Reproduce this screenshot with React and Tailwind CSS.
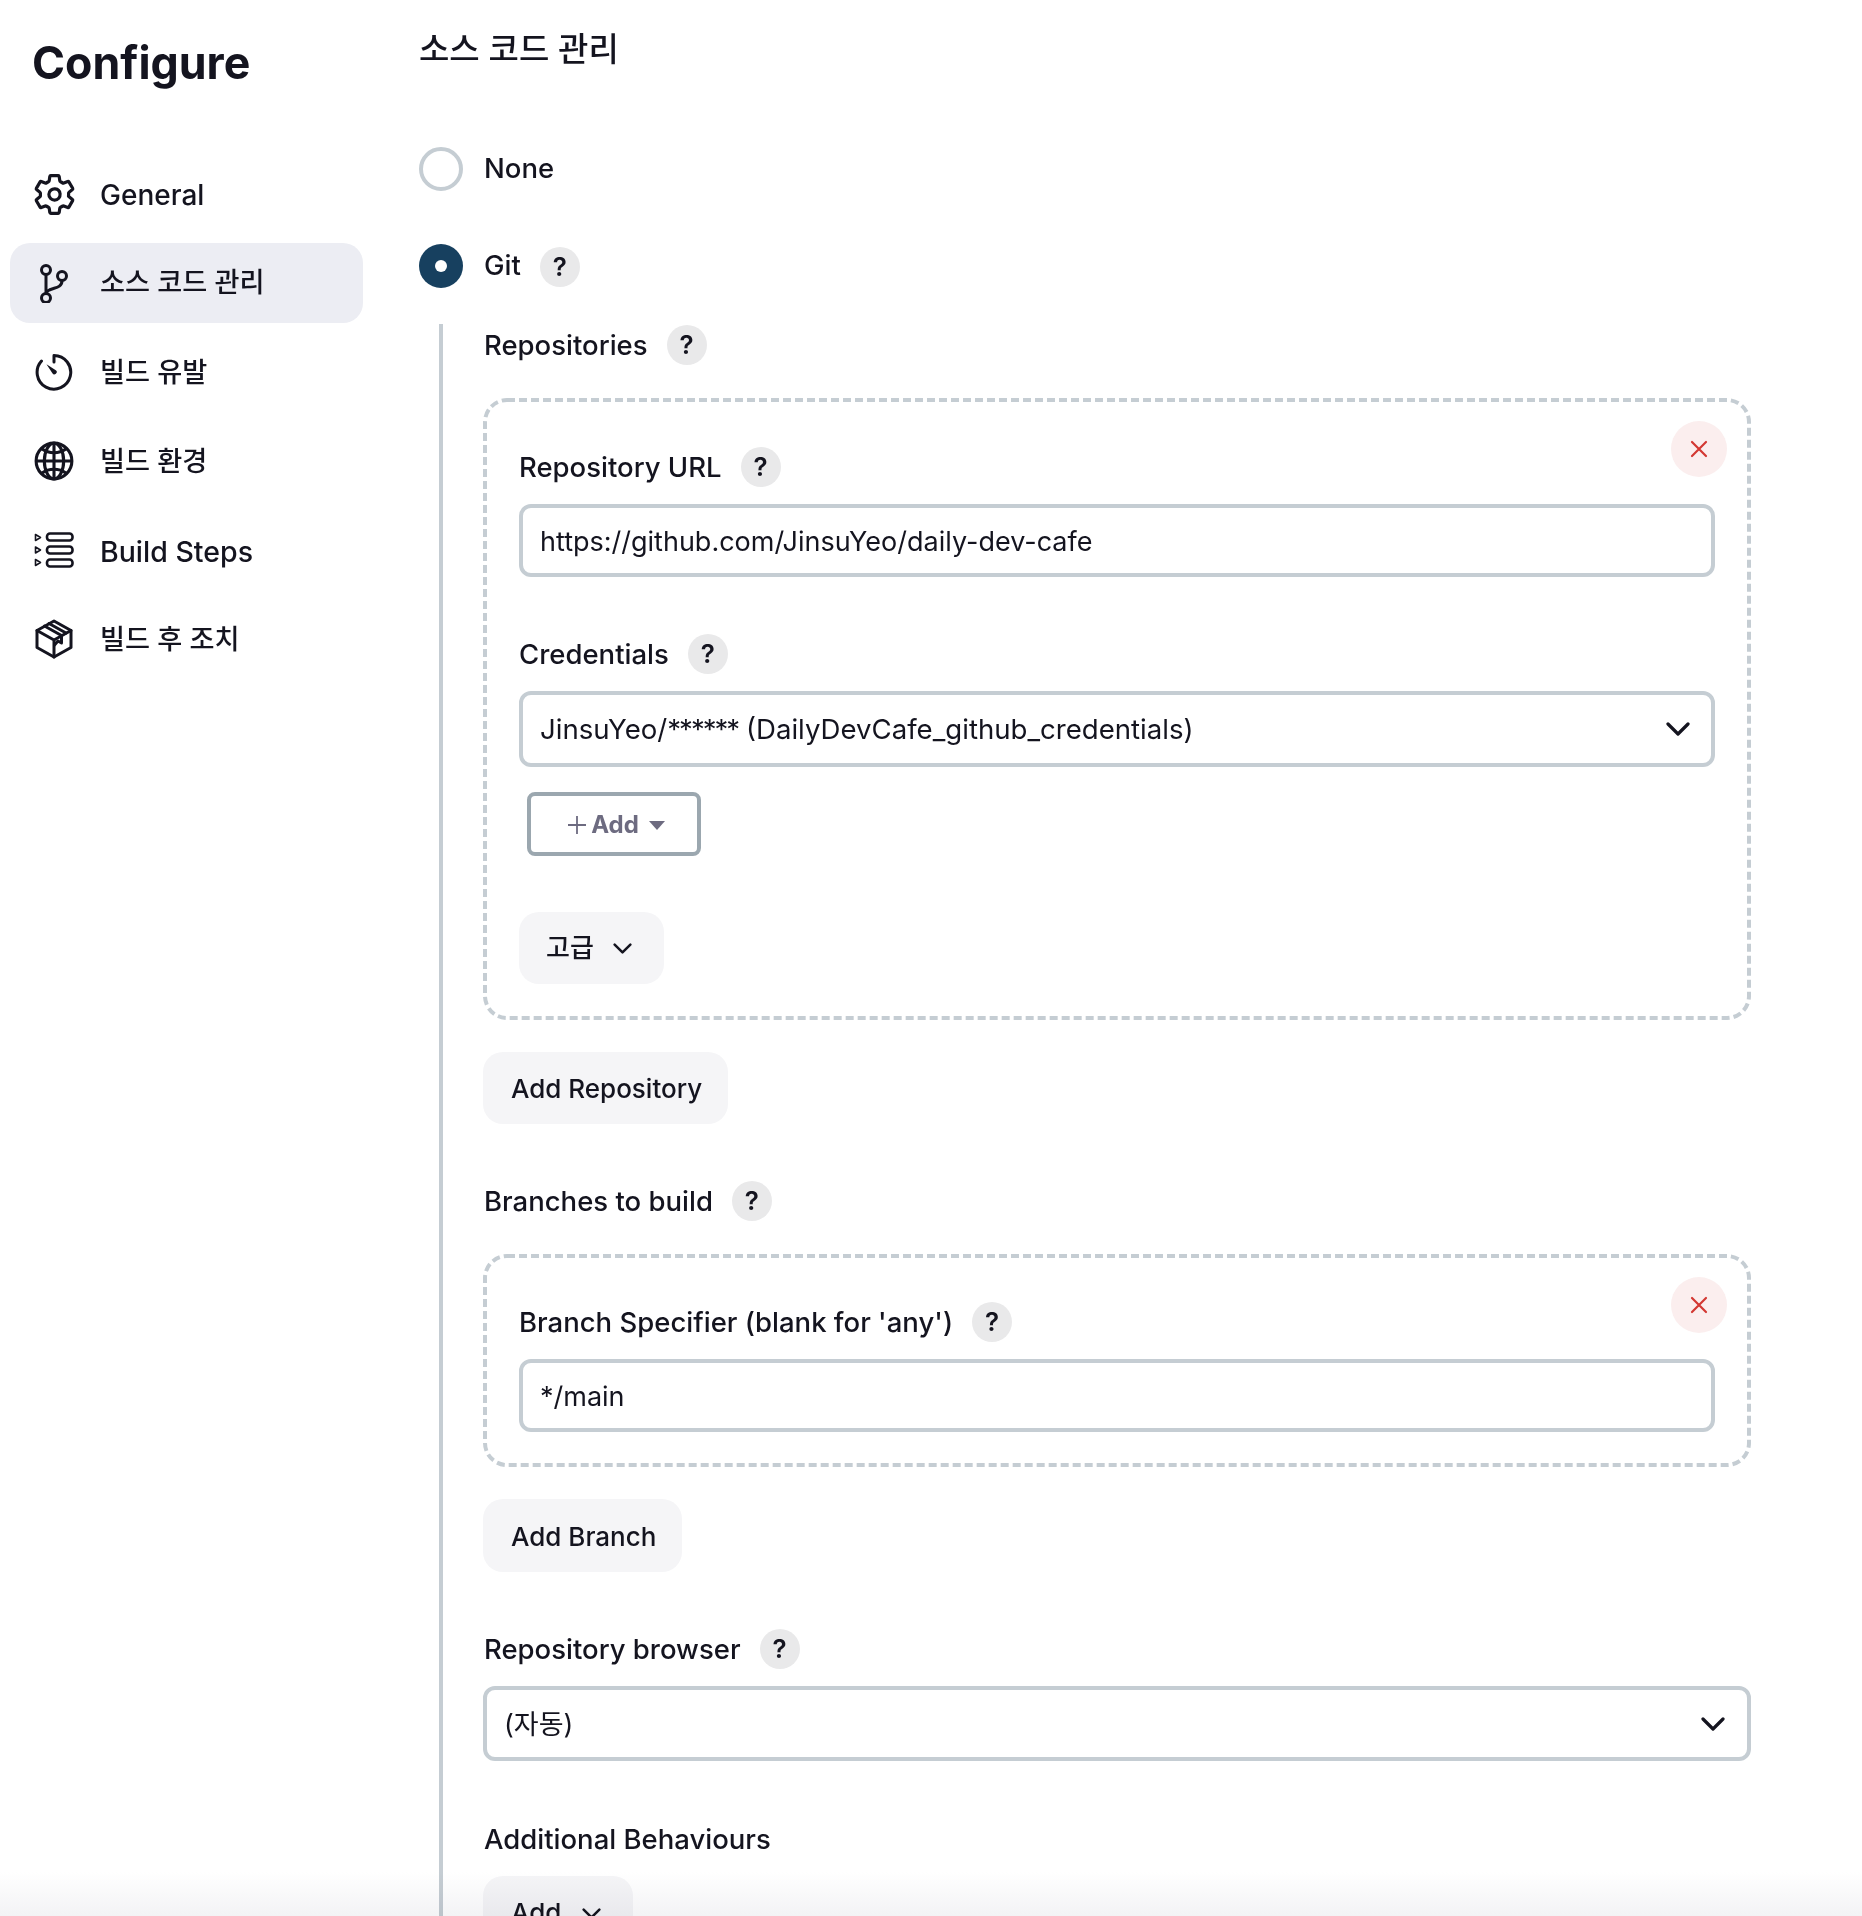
import React from "react";
import { IoSettingsOutline, IoGlobeOutline } from "react-icons/io5";

const Branch = () => (
  <svg viewBox="0 0 40 40" className="h-10 w-10" fill="none" stroke="currentColor" strokeWidth="3" strokeLinecap="round">
    <circle cx="12" cy="7" r="4.5" />
    <circle cx="12" cy="35" r="4.5" />
    <circle cx="28" cy="13" r="4.5" />
    <path d="M12 11.500v19M28 17.500c0 6-5 7-8.500 8-4 1.200-7.500 2.500-7.500 5" />
  </svg>
);

const Timer = () => (
  <svg viewBox="0 0 40 40" className="h-10 w-10" fill="none" stroke="currentColor" strokeWidth="3" strokeLinecap="round">
    <path d="M20 3.500v6.500M20 3.500A16.800 16.800 0 1 1 7.500 9" />
    <path d="M12.500 12.200l9.300 6a2.300 2.300 0 1 1-3.400 3z" fill="currentColor" stroke="none" />
  </svg>
);

const Steps = () => (
  <svg viewBox="0 0 40 36" className="h-9 w-10" fill="none" stroke="currentColor" strokeWidth="2.6" strokeLinejoin="round">
    <path d="M1.500 2.500v6l5-3z M1.500 15v6l5-3z M1.500 27.500v6l5-3z" strokeWidth="1.6" />
    <rect x="13" y="1.500" width="25.500" height="7" rx="3" />
    <rect x="13" y="14.500" width="25.500" height="7" rx="3" />
    <rect x="13" y="27.500" width="25.500" height="7" rx="3" />
  </svg>
);

const Cube = () => (
  <svg viewBox="0 0 40 40" className="h-10 w-10" fill="none" stroke="currentColor" strokeWidth="3" strokeLinejoin="round" strokeLinecap="round">
    <path d="M20 2 37 11.500v17L20 38 3 28.500v-17z" />
    <path d="M3 11.500 20 21l17-9.500M20 21v17" />
    <path d="M10.500 7 27.500 16.500v7.500l-3.500-2-3.500 4M15 4.500l17 9.500" />
  </svg>
);

const Chevron = ({ className }) => (
  <svg viewBox="0 0 24 14" className={className} fill="none" stroke="currentColor" strokeWidth="3.200" strokeLinecap="round" strokeLinejoin="round">
    <path d="M2 2l10 10L22 2" />
  </svg>
);

const Help = ({ className = "" }) => (
  <span className={`flex h-10 w-10 items-center justify-center rounded-full bg-[#e9e9ea] text-[26px] font-semibold leading-none text-[#14141f] ${className}`}>?</span>
);

const Label = ({ text, className = "" }) => (
  <div className={`flex h-10 items-center gap-[19px] ${className}`}>
    <span className="text-[27.5px] font-[450] leading-10">{text}</span>
    <Help />
  </div>
);

const DashedFrame = () => (
  <svg className="pointer-events-none absolute inset-0 h-full w-full" fill="none">
    <rect x="2" y="2" width="calc(100% - 4px)" height="calc(100% - 4px)" rx="22" stroke="#c5cdd3" strokeWidth="4" strokeDasharray="8 4" />
  </svg>
);

const Remove = () => (
  <button className="absolute right-[24px] top-[23px] flex h-14 w-14 items-center justify-center rounded-full bg-[#fbeeee] text-[#d33833]">
    <svg viewBox="0 0 18 18" className="h-[18px] w-[18px]" fill="none" stroke="currentColor" strokeWidth="2.200" strokeLinecap="round">
      <path d="M2 2l14 14M16 2L2 16" />
    </svg>
  </button>
);

const Field = ({ children, className = "" }) => (
  <div className={`flex items-center rounded-xl border-4 border-[#c5cdd3] bg-white pl-[17px] leading-10 ${className}`}>{children}</div>
);

const Soft = ({ children, className = "" }) => (
  <button className={`flex items-center rounded-[20px] bg-[#f5f5f7] text-[26px] font-[450] leading-10 text-[#14141f] ${className}`}>{children}</button>
);

const NavItem = ({ icon, label, active, textClass }) => (
  <a className={`flex h-20 items-center rounded-[20px] pl-6 font-[450] text-[#14141f] ${active ? "bg-[#ecedf3]" : ""}`}>
    <span className="flex w-10 shrink-0 justify-center">{icon}</span>
    <span className={`ml-[26px] ${textClass}`}>{label}</span>
  </a>
);

export default function App() {
  return (
    <div className="relative flex h-[1916px] overflow-hidden bg-white text-[#14141f] [font-family:Inter,'Noto_Sans_CJK_KR',sans-serif]">
      <aside className="w-[419px] shrink-0 pl-[10px]">
        <h1 className="ml-[22px] mt-[33px] text-[44.7px] font-bold leading-[60px]">Configure</h1>
        <nav className="mt-[61px] flex w-[353px] flex-col gap-[9px]">
          <NavItem textClass="pt-[2px] text-[28px]" icon={<IoSettingsOutline size={45} className="shrink-0 [&_*]:[stroke-width:36px]" />} label="General" />
          <NavItem active textClass="text-[27.2px]" icon={<Branch />} label="소스 코드 관리" />
          <NavItem textClass="pt-[2px] text-[27.2px]" icon={<Timer />} label="빌드 유발" />
          <NavItem textClass="pt-[2px] text-[27.2px]" icon={<IoGlobeOutline size={44} className="shrink-0 [&_*]:[stroke-width:36px]" />} label="빌드 환경" />
          <NavItem textClass="pt-[4px] text-[28.5px]" icon={<Steps />} label="Build Steps" />
          <NavItem textClass="pt-[2px] text-[27.2px]" icon={<Cube />} label="빌드 후 조치" />
        </nav>
      </aside>

      <main className="w-[1332px]">
        <h2 className="mt-[26px] text-[33px] font-medium leading-[46px]">소스 코드 관리</h2>

        <div className="mt-[75px] flex h-11 items-center">
          <span className="h-11 w-11 rounded-full border-4 border-[#c5cdd3]" />
          <span className="ml-[21px] text-[27.5px] font-[450]">None</span>
        </div>

        <div className="mt-[53px] flex h-11 items-center">
          <span className="flex h-11 w-11 items-center justify-center rounded-full bg-[#17405f]">
            <span className="h-3 w-3 rounded-full bg-white" />
          </span>
          <span className="ml-[21px] text-[27.5px] font-[450]">Git</span>
          <Help className="ml-[19px] mt-[2px]" />
        </div>

        <div className="ml-5 mt-[36px] border-l-4 border-[#c5cdd3] pl-[40px]">
          <Label text="Repositories" className="ml-px pt-[2px]" />

          <div className="relative mt-[34px] h-[622px] pl-[36px] pr-[36px] pt-[49px]">
            <DashedFrame />
            <Remove />
            <Label text="Repository URL" />
            <Field className="mt-[17px] h-[73px] pt-[3px] text-[27px]">https://github.com/JinsuYeo/daily-dev-cafe</Field>
            <Label text="Credentials" className="mt-[57px]" />
            <Field className="relative mt-[17px] h-[76px] text-[27.6px]">
              <span>JinsuYeo/<span className="tracking-[-2px]">******</span> (DailyDevCafe_github_credentials)</span>
              <Chevron className="absolute right-[21px] top-[27px] h-[14px] w-6" />
            </Field>
            <button className="ml-2 mt-[25px] flex h-16 w-[174px] items-center justify-center gap-[10px] rounded-lg border-4 border-[#9ba7af] pl-[5px] pt-[2px] text-[24px] font-bold text-[#6d6b80]">
              <span className="flex items-center gap-[5px]">
                <svg viewBox="0 0 18 18" className="h-[18px] w-[18px]" stroke="currentColor" strokeWidth="1.800"><path d="M9 0v18M0 9h18" /></svg>
                Add
              </span>
              <svg viewBox="0 0 16 9" className="h-[9px] w-4" fill="currentColor"><path d="M0 0h16L8 9z" /></svg>
            </button>
            <Soft className="mt-[56px] h-[72px] w-[145px] pl-[27px]">
              고급
              <Chevron className="ml-[19px] h-[11px] w-[19px]" />
            </Soft>
          </div>

          <Soft className="mt-[32px] h-[72px] w-[245px] pl-[28px] pt-[2px]">Add Repository</Soft>

          <Label text="Branches to build" className="ml-px mt-[57px]" />

          <div className="relative mt-[33px] h-[213px] pl-[36px] pr-[36px] pt-[48px]">
            <DashedFrame />
            <Remove />
            <Label text="Branch Specifier (blank for 'any')" />
            <Field className="mt-[17px] h-[73px] pt-[3px] text-[27px]">*/main</Field>
          </div>

          <Soft className="mt-[32px] h-[73px] w-[199px] pl-[28px] pt-[2px]">Add Branch</Soft>

          <Label text="Repository browser" className="ml-px mt-[57px]" />
          <Field className="relative mt-[17px] h-[75px] pt-[3px] text-[27px]">
            (자동)
            <Chevron className="absolute right-[22px] top-[27px] h-[14px] w-6" />
          </Field>

          <div className="ml-px mt-[58px] h-10 text-[27.5px] font-[450] leading-10">Additional Behaviours</div>
          <Soft className="mt-[17px] h-[72px] w-[150px] pl-[28px] pt-[2px]">
            Add
            <Chevron className="ml-[21px] h-[11px] w-[19px]" />
          </Soft>
        </div>
      </main>

      <div className="pointer-events-none absolute inset-x-0 bottom-0 h-[44px] bg-gradient-to-b from-white to-[#f3f3f5] mix-blend-multiply" />
    </div>
  );
}
